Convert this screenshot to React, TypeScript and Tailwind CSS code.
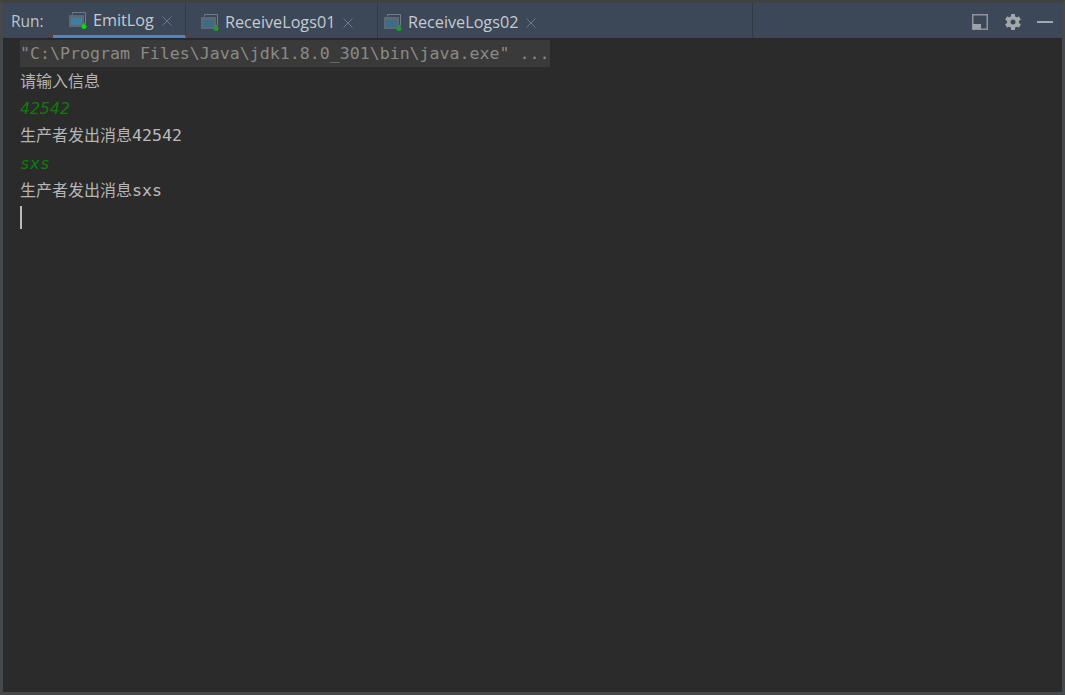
import React from 'react';

const MONO = "font-['DejaVu_Sans_Mono','Noto_Sans_CJK_SC',monospace]";

function RunIcon({ bright = false }: { bright?: boolean }) {
  return (
    <svg width="20" height="20" viewBox="0 0 20 20" className="shrink-0">
      <path d="M4.500 3.500V1.500H17.500V12.500H15.500" fill="none" stroke="#6e7c88" strokeWidth="1" />
      <rect x="1" y="4" width="15" height="12" fill="#5c6873" />
      <rect x="3" y="7" width="11" height="7" fill={bright ? '#3f7f9e' : '#3c6d85'} />
      <circle cx="16" cy="15.500" r="2.500" fill={bright ? '#00e000' : '#1b9e2c'} />
    </svg>
  );
}

function CloseIcon() {
  return (
    <svg width="10" height="10" viewBox="0 0 10 10" className="ml-[8px] shrink-0">
      <path d="M.5 .5L9.500 9.500M9.500 .5L.5 9.500" stroke="#6f7a85" strokeWidth="1" />
    </svg>
  );
}

function Tab({ label, className }: { label: string; className: string }) {
  return (
    <div className={`flex h-full items-center border-r border-[#323a44] ${className}`}>
      <RunIcon bright={label === 'EmitLog'} />
      <span className="ml-[5px] text-[16.2px] text-[#c4cbd2]">{label}</span>
      <CloseIcon />
    </div>
  );
}

export default function App() {
  return (
    <div className="flex h-[695px] w-[1065px] flex-col border-x-[3px] border-b-[3px] border-t-[3px] border-x-[#45494c] border-b-[#45494c] border-t-[#3f4143] bg-[#2b2b2b] font-['Open_Sans',sans-serif]">
      {/* Tool window header */}
      <div className="flex h-[36px] shrink-0 items-center border-b border-[#272727] bg-[#3c4857]">
        <span className="ml-[8px] w-[42px] pt-[3px] text-[15.5px] text-[#bcc3ca]">Run:</span>
        <Tab label="EmitLog" className="w-[133px] border-b-[3px] border-b-[#4a88c7] pl-[15px] pt-[3px]" />
        <Tab label="ReceiveLogs01" className="w-[192px] pl-[14px] pt-[4px]" />
        <Tab label="ReceiveLogs02" className="w-[375px] pl-[5px] pt-[4px]" />
        <div className="ml-auto flex items-center gap-[16px] pr-[9px] pt-[3px]">
          <svg width="16" height="16" viewBox="0 0 16 16" className="mr-px">
            <rect x=".75" y=".75" width="14.500" height="14.500" fill="none" stroke="#8f959a" strokeWidth="1.500" />
            <rect x="1" y="10" width="8" height="5" fill="#9da3a8" />
          </svg>
          <svg width="16" height="16" viewBox="0 0 16 16">
            <g fill="#a3a8ad">
              <circle cx="8" cy="8" r="6" />
              <rect x="6" y="0" width="4" height="16" rx=".5" />
              <rect x="6" y="0" width="4" height="16" rx=".5" transform="rotate(60 8 8)" />
              <rect x="6" y="0" width="4" height="16" rx=".5" transform="rotate(120 8 8)" />
            </g>
            <circle cx="8" cy="8" r="2.500" fill="#3c4857" />
          </svg>
          <div className="h-[2px] w-[16px] bg-[#a3a8ad]" />
        </div>
      </div>

      {/* Console output */}
      <div className={`flex flex-1 flex-col items-start pl-[17px] pt-[1px] text-[16.6px] leading-[27px] text-[#bbbbbb] ${MONO}`}>
        <div className="h-[27px] bg-[#3a3a3a] text-[#8a8a84]">"C:\Program Files\Java\jdk1.8.0_301\bin\java.exe" ...</div>
        <div className="mt-px text-[16px] text-[#b4b4b4]">请输入信息</div>
        <div className="italic text-[#0a7d0a]">42542</div>
        <div>
          <span className="text-[16px] text-[#b4b4b4]">生产者发出消息</span>42542
        </div>
        <div className="mt-px italic text-[#0a7d0a]">sxs</div>
        <div>
          <span className="text-[16px] text-[#b4b4b4]">生产者发出消息</span>sxs
        </div>
        <div className="mt-[2px] h-[23px] w-[2px] bg-[#bbbbbb]" />
      </div>
    </div>
  );
}
